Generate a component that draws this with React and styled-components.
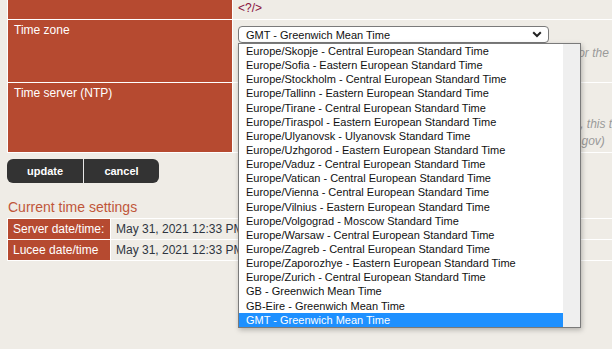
import React from 'react';
import styled, { createGlobalStyle } from 'styled-components';

const Global = createGlobalStyle`
  html, body { margin: 0; padding: 0; background: #efece6; overflow: hidden; }
  body { font-family: "Liberation Sans", Arial, sans-serif; }
`;

const RED = '#b64a30';

const Page = styled.div`
  width: 612px;
  height: 349px;
  overflow: hidden;
  padding-left: 7px;
  box-sizing: border-box;
`;

const FormTable = styled.div`
  width: 800px;
  border-left: 1px solid #fff;
  border-top: ${p => (p.$top ? '1px solid #fff' : 'none')};
`;

const Row = styled.div`
  display: grid;
  grid-template-columns: ${p => p.$label}px 1fr;
  height: ${p => p.$h}px;
  border-bottom: 1px solid #fff;
`;

const Label = styled.div`
  background: ${RED};
  color: #fff;
  font-size: 12px;
  line-height: 14px;
  padding: ${p => (p.$center ? '0 5px' : '3px 6px')};
  display: ${p => (p.$center ? 'flex' : 'block')};
  align-items: center;
  border-right: 1px solid #fff;
  white-space: nowrap;
`;

const Cell = styled.div`
  padding: ${p => p.$pad || '0 5px'};
  display: ${p => (p.$center ? 'flex' : 'block')};
  align-items: center;
  min-width: 0;
`;

const Tag = styled.span`
  display: block;
  color: #8a1240;
  font-size: 12px;
  line-height: 19px;
  margin-top: -1px;
`;

const SelectWrap = styled.div`
  position: relative;
  width: 311px;
`;

const SelectBox = styled.div`
  height: 17px;
  box-sizing: border-box;
  border: 1px solid #7a7a7a;
  border-radius: 4px;
  background: #fff;
  display: flex;
  align-items: center;
  justify-content: space-between;
  padding: 0 6px 0 7px;
  font-size: 11px;
  color: #111;
`;

const Dropdown = styled.div`
  position: absolute;
  top: 100%;
  left: 0;
  width: 343px;
  height: 285px;
  box-sizing: border-box;
  border: 1px solid #7a7a7a;
  background: #efefef;
  box-shadow: 1px 2px 5px rgba(0, 0, 0, 0.25);
  display: grid;
  grid-template-columns: 1fr 17px;
  z-index: 5;
`;

const List = styled.ul`
  list-style: none;
  margin: 0;
  padding: 0;
  background: #fff;
  overflow: hidden;
`;

const Option = styled.li`
  height: 14.15px;
  line-height: 14px;
  padding-left: 7px;
  font-size: 11px;
  white-space: nowrap;
  color: ${p => (p.$selected ? '#fff' : '#111')};
  background: ${p => (p.$selected ? '#1e90ff' : 'transparent')};
`;

const Desc = styled.div`
  font-size: 12px;
  font-style: italic;
  color: #9a9a9a;
  line-height: 17px;
  white-space: nowrap;
  margin-top: ${p => p.$mt || 0}px;
`;

const TextInput = styled.div`
  width: 300px;
  height: 20px;
  border: 1px solid #aaa;
  background: #fff;
`;

const ButtonBar = styled.div`
  display: flex;
  margin-top: 6px;
`;

const Button = styled.button`
  width: 76px;
  height: 24px;
  box-sizing: border-box;
  border: none;
  border-left: ${p => (p.$last ? '1px solid #e8e8e8' : 'none')};
  background: #333;
  color: #fff;
  font-family: "Liberation Sans", Arial, sans-serif;
  font-weight: bold;
  font-size: 11px;
  padding: 0;
  border-radius: ${p => (p.$last ? '0 6px 6px 0' : '6px 0 0 6px')};
`;

const Title = styled.h2`
  margin: 16px 0 3px 1px;
  font-size: 14px;
  line-height: 16px;
  font-weight: normal;
  color: #c0563a;
`;

const Value = styled.span`
  font-size: 12px;
  color: #2e3540;
  white-space: nowrap;
`;

const Chevron = () => (
  <svg width="10" height="7" viewBox="0 0 10 7">
    <path d="M1.2 1.3 L5 5 L8.8 1.3" fill="none" stroke="#222" strokeWidth="2" />
  </svg>
);

const zones = [
  'Europe/Skopje - Central European Standard Time',
  'Europe/Sofia - Eastern European Standard Time',
  'Europe/Stockholm - Central European Standard Time',
  'Europe/Tallinn - Eastern European Standard Time',
  'Europe/Tirane - Central European Standard Time',
  'Europe/Tiraspol - Eastern European Standard Time',
  'Europe/Ulyanovsk - Ulyanovsk Standard Time',
  'Europe/Uzhgorod - Eastern European Standard Time',
  'Europe/Vaduz - Central European Standard Time',
  'Europe/Vatican - Central European Standard Time',
  'Europe/Vienna - Central European Standard Time',
  'Europe/Vilnius - Eastern European Standard Time',
  'Europe/Volgograd - Moscow Standard Time',
  'Europe/Warsaw - Central European Standard Time',
  'Europe/Zagreb - Central European Standard Time',
  'Europe/Zaporozhye - Eastern European Standard Time',
  'Europe/Zurich - Central European Standard Time',
  'GB - Greenwich Mean Time',
  'GB-Eire - Greenwich Mean Time',
  'GMT - Greenwich Mean Time',
];

export default function App() {
  return (
    <Page>
      <Global />
      <FormTable>
        <Row $label={225} $h={19}>
          <Label />
          <Cell>
            <Tag>&lt;?/&gt;</Tag>
          </Cell>
        </Row>
        <Row $label={225} $h={62}>
          <Label>Time zone</Label>
          <Cell $pad="6px 5px 0">
            <SelectWrap>
              <SelectBox>
                <span>GMT - Greenwich Mean Time</span>
                <Chevron />
              </SelectBox>
              <Dropdown>
                <List>
                  {zones.map(z => (
                    <Option key={z} $selected={z.startsWith('GMT')}>
                      {z}
                    </Option>
                  ))}
                </List>
              </Dropdown>
            </SelectWrap>
            <Desc $mt={2}>Define the time zone that is used by all date and time functions for the current context.</Desc>
          </Cell>
        </Row>
        <Row $label={225} $h={69}>
          <Label>Time server (NTP)</Label>
          <Cell $pad="6px 5px 0">
            <TextInput />
            <Desc $mt={5}>Url of a time server that is used to synchronize the time of Lucee, this time server is used</Desc>
            <Desc>instead of the local time of the server host (for example time.nist.gov)</Desc>
          </Cell>
        </Row>
      </FormTable>
      <ButtonBar>
        <Button>update</Button>
        <Button $last>cancel</Button>
      </ButtonBar>
      <Title>Current time settings</Title>
      <FormTable $top>
        <Row $label={103} $h={20}>
          <Label $center>Server date/time:</Label>
          <Cell $center>
            <Value>May 31, 2021 12:33 PM</Value>
          </Cell>
        </Row>
        <Row $label={103} $h={20}>
          <Label $center>Lucee date/time</Label>
          <Cell $center>
            <Value>May 31, 2021 12:33 PM</Value>
          </Cell>
        </Row>
      </FormTable>
    </Page>
  );
}
